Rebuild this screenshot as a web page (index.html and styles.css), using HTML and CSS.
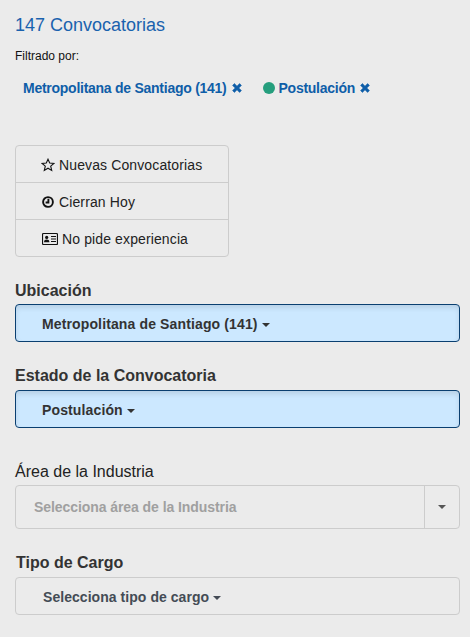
FILE: index.html
```html
<!DOCTYPE html>
<html lang="es">
<head>
  <meta charset="UTF-8" />
  <meta name="viewport" content="width=device-width, initial-scale=1.0"/>
  <title>Convocatorias</title>
  <link rel="stylesheet" href="styles.css">
</head>
<body>
  <div class="filtros">
    <h1 class="titulo">147 Convocatorias</h1>
    <p class="filtrado">Filtrado por:</p>
    <div class="activos">
      <a class="activo" href="#">Metropolitana de Santiago (141)
        <svg class="quitar" viewBox="0 0 12 12"><path d="M1.6 3.4 3.4 1.6 6 4.2 8.6 1.6 10.4 3.4 7.8 6 10.4 8.6 8.6 10.4 6 7.8 3.4 10.4 1.6 8.6 4.2 6Z"/></svg>
      </a>
      <a class="activo activo-estado" href="#"><span class="punto"></span>Postulación
        <svg class="quitar" viewBox="0 0 12 12"><path d="M1.6 3.4 3.4 1.6 6 4.2 8.6 1.6 10.4 3.4 7.8 6 10.4 8.6 8.6 10.4 6 7.8 3.4 10.4 1.6 8.6 4.2 6Z"/></svg>
      </a>
    </div>

    <ul class="lista">
      <li>
        <svg class="icono icono-estrella" viewBox="0 0 14 14"><path d="M7 1.2 8.7 5 12.9 5.4 9.7 8.2 10.7 12.4 7 10.2 3.3 12.4 4.3 8.2 1.1 5.4 5.3 5Z"/></svg>
        Nuevas Convocatorias
      </li>
      <li>
        <svg class="icono icono-reloj" viewBox="0 0 14 14"><circle cx="7" cy="7" r="4.9"/><path d="M7.4 3.8V7.5H4.6"/></svg>
        Cierran Hoy
      </li>
      <li>
        <svg class="icono icono-tarjeta" viewBox="0 0 16 14"><rect x="0.5" y="1.5" width="15" height="11" rx="1"/><circle class="relleno" cx="4.7" cy="5.4" r="1.6"/><path class="relleno" d="M2 10.2C2 8 3.2 7.4 4.7 7.4S7.4 8 7.4 10.2Z"/><path d="M9 4.5H14M9 7H14M9 9.5H14"/></svg>
        No pide experiencia
      </li>
    </ul>

    <h2 class="etiqueta etiqueta-corta">Ubicación</h2>
    <button class="selector selector-activo">Metropolitana de Santiago (141) <span class="caret"></span></button>

    <h2 class="etiqueta">Estado de la Convocatoria</h2>
    <button class="selector selector-activo">Postulación <span class="caret"></span></button>

    <h2 class="etiqueta etiqueta-corta etiqueta-area">Área de la Industria</h2>
    <div class="combo">
      <span class="combo-texto">Selecciona área de la Industria</span>
      <span class="combo-flecha"><span class="caret"></span></span>
    </div>

    <h2 class="etiqueta etiqueta-tipo">Tipo de Cargo</h2>
    <button class="selector selector-tipo">Selecciona tipo de cargo <span class="caret"></span></button>
  </div>
</body>
</html>
```

FILE: styles.css
```css
* { box-sizing: border-box; }

html, body { height: 100%; }

body {
  margin: 0;
  font-family: 'Liberation Sans', Arial, sans-serif;
  font-size: 14px;
  line-height: 20px;
  color: #333;
  background-color: #ebebeb;
  overflow: hidden;
}

.filtros {
  padding: 15px 10px 0 15px;
}

.titulo {
  margin: 0;
  font-size: 18px;
  line-height: 20px;
  font-weight: 400;
  color: #1a62ae;
}

.filtrado {
  margin: 11px 0 0;
  font-size: 12px;
  line-height: 20px;
  color: #111;
}

.activos {
  display: flex;
  gap: 20px;
  margin: 12px 0 0 8px;
}

.activo {
  display: flex;
  align-items: center;
  font-size: 14px;
  font-weight: 700;
  letter-spacing: -0.26px;
  color: #0f5ea8;
  text-decoration: none;
}

.quitar {
  width: 12px;
  height: 12px;
  margin-left: 4px;
  fill: #0f5ea8;
  stroke: #0f5ea8;
  stroke-width: 0.6;
}

.punto {
  width: 12px;
  height: 12px;
  margin-right: 4px;
  border-radius: 50%;
  background-color: #259e7d;
}

.lista {
  width: 214px;
  margin: 47px 0 0;
  padding: 0;
  list-style: none;
  border: 1px solid #ccc;
  border-radius: 4px;
  color: #222;
  letter-spacing: 0.12px;
}

.lista li {
  display: flex;
  align-items: center;
  gap: 4px;
  height: 37px;
  padding: 2px 0 0 25px;
  border-top: 1px solid #ccc;
}

.lista li:first-child {
  height: 36px;
  border-top: none;
}

.icono {
  height: 14px;
  fill: none;
  stroke: #111;
}

.icono-estrella { width: 14px; stroke-width: 1.1; }
.icono-reloj { width: 14px; stroke-width: 1.9; }
.icono-tarjeta { width: 16px; margin-left: 1px; stroke-width: 1.2; }
.icono-tarjeta .relleno { fill: #111; stroke: none; }

.etiqueta {
  margin: 24px 0 4px;
  font-size: 16px;
  line-height: 20px;
  font-weight: 700;
  color: #333;
}

.etiqueta-corta { margin-bottom: 3px; }
.etiqueta-area { margin-top: 34px; font-weight: 400; color: #222; }
.etiqueta-tipo { padding-left: 1px; }

.selector {
  display: block;
  width: 100%;
  height: 38px;
  padding: 2px 0 0 26px;
  font-family: inherit;
  font-size: 14px;
  font-weight: 700;
  letter-spacing: 0.13px;
  text-align: left;
  color: #333;
  background-color: #ebebeb;
  border: 1px solid #ccc;
  border-radius: 4px;
}

.selector-activo {
  background-color: #cce8ff;
  border-color: #0a3f70;
  box-shadow: inset 0 3px 5px rgba(0, 0, 0, 0.1);
}

.selector-tipo {
  padding-left: 27px;
  letter-spacing: 0.05px;
  color: #444b55;
}

.caret {
  display: inline-block;
  width: 0;
  height: 0;
  vertical-align: middle;
  border-top: 4px solid;
  border-left: 4px solid transparent;
  border-right: 4px solid transparent;
}

.combo {
  display: flex;
  height: 44px;
  border: 1px solid #ccc;
  border-radius: 4px;
}

.combo-texto {
  flex: 1;
  padding-left: 18px;
  line-height: 42px;
  font-weight: 700;
  letter-spacing: -0.07px;
  color: #a0a0a0;
}

.combo-flecha {
  display: flex;
  align-items: center;
  justify-content: center;
  width: 35px;
  color: #555;
  border-left: 1px solid #ccc;
}
```
